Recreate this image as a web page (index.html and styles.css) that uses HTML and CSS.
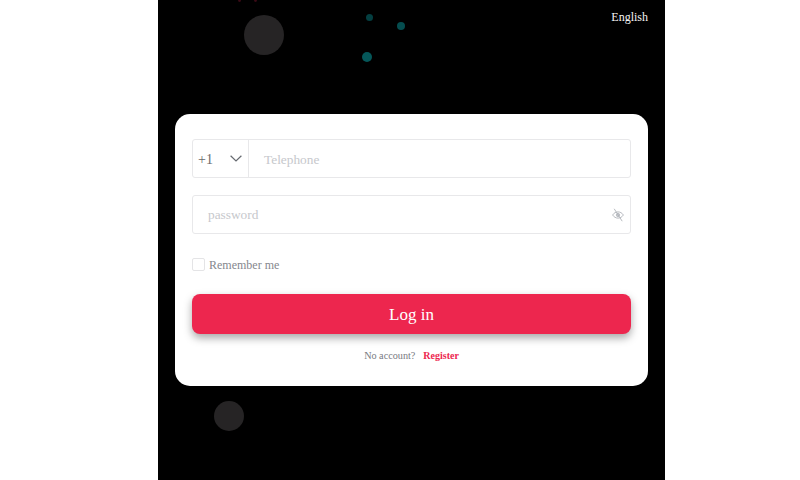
FILE: index.html
```html
<!DOCTYPE html>
<html lang="en">
<head>
<meta charset="utf-8">
<title>Log in</title>
<link rel="stylesheet" href="styles.css">
</head>
<body>
<main class="phone">
  <span class="bubble b1"></span>
  <span class="bubble b2"></span>
  <span class="bubble b3"></span>
  <span class="bubble b4"></span>
  <span class="bubble b5"></span>
  <span class="bubble b6"></span>
  <span class="bubble b7"></span>
  <header class="topbar"><span class="lang">English</span></header>
  <form class="card">
    <div class="field">
      <div class="code">
        <span class="nudge">+1</span>
        <svg class="chev" viewBox="0 0 12 7" width="12" height="7"><path d="M.6.8 6 6 11.4.8" fill="none" stroke="#666a70" stroke-width="1.2"/></svg>
      </div>
      <span class="placeholder tel nudge">Telephone</span>
    </div>
    <div class="field pass">
      <span class="placeholder">password</span>
      <svg class="eye" viewBox="0 0 12 14" width="12" height="14"><path d="M.6 7C2 4.9 3.9 3.9 6 3.9S10 4.9 11.4 7C10 9.1 8.1 10.1 6 10.1S2 9.1.6 7Z" fill="none" stroke="#b0b3b9" stroke-width=".9"/><circle cx="6" cy="7" r="1.7" fill="#c4c6cb" stroke="#b0b3b9" stroke-width=".7"/><path d="M2.2.8 10.2 13.2" stroke="#b0b3b9" stroke-width=".9"/></svg>
    </div>
    <label class="remember"><span class="box"></span><span class="nudge">Remember me</span></label>
    <div class="submit"><span class="nudge">Log in</span></div>
    <p class="foot"><span>No account?</span><a class="reg">Register</a></p>
  </form>
</main>
</body>
</html>
```
FILE: styles.css
```css
* { box-sizing: border-box; }
html, body { margin: 0; height: 100%; background: #fff; overflow: hidden; }
body { font-family: "Liberation Serif", serif; }
.phone {
  position: relative;
  width: 507px;
  height: 480px;
  margin-left: 158px;
  padding: 10px 17px 0;
  background: #000;
  overflow: hidden;
}
.topbar { display: flex; justify-content: flex-end; height: 104px; }
.lang { color: #f4f4f4; font-size: 12px; line-height: 14px; }
.bubble { position: absolute; border-radius: 50%; }
.b1 { left: 86px; top: 15px; width: 40px; height: 40px; background: #262425; }
.b2 { left: 56px; top: 401px; width: 30px; height: 30px; background: #262425; }
.b3 { left: 208px; top: 14px; width: 7px; height: 7px; background: #043f41; }
.b4 { left: 239px; top: 22px; width: 8px; height: 8px; background: #054d4f; }
.b5 { left: 204px; top: 52px; width: 10px; height: 10px; background: #055759; }
.b6 { left: 80px; top: -2px; width: 3px; height: 4px; background: #3a0a15; }
.b7 { left: 96px; top: -2px; width: 3px; height: 4px; background: #3a0a15; }
.card {
  position: relative;
  display: flex;
  flex-direction: column;
  height: 272px;
  padding: 25px 17px 0;
  background: #fff;
  border-radius: 15px;
}
.field {
  display: flex;
  align-items: center;
  height: 39px;
  border: 1px solid #e8e8ea;
  border-radius: 3px;
  font-size: 13.33px;
}
.nudge { margin-top: 2px; }
.pass { justify-content: space-between; margin-top: 17px; padding: 0 6px 0 15px; }
.code {
  display: flex;
  align-items: center;
  justify-content: space-between;
  width: 56px;
  height: 100%;
  padding: 0 6px 0 5px;
  border-right: 1px solid #e8e8ea;
  color: #6a6a6c;
  font-size: 14px;
}
.placeholder { color: #c6c8cc; }
.tel { margin-left: 15px; }
.remember {
  display: flex;
  align-items: center;
  gap: 4px;
  height: 13px;
  margin-top: 24px;
  color: #85878d;
  font-size: 12px;
  line-height: 13px;
}
.box { width: 13px; height: 13px; border: 1px solid #e4e4e6; border-radius: 2px; }
.submit {
  display: flex;
  align-items: center;
  justify-content: center;
  height: 40px;
  margin-top: 23px;
  background: #ed264e;
  border-radius: 8px;
  color: #fff;
  font-size: 17px;
  box-shadow: 0 4px 8px rgba(0, 0, 0, .35);
}
.foot {
  display: flex;
  justify-content: center;
  gap: 8px;
  margin: 16px 0 0;
  color: #77797f;
  font-size: 10.2px;
  line-height: 12px;
}
.reg { color: #ed264e; font-weight: 700; font-size: 10px; }
```
